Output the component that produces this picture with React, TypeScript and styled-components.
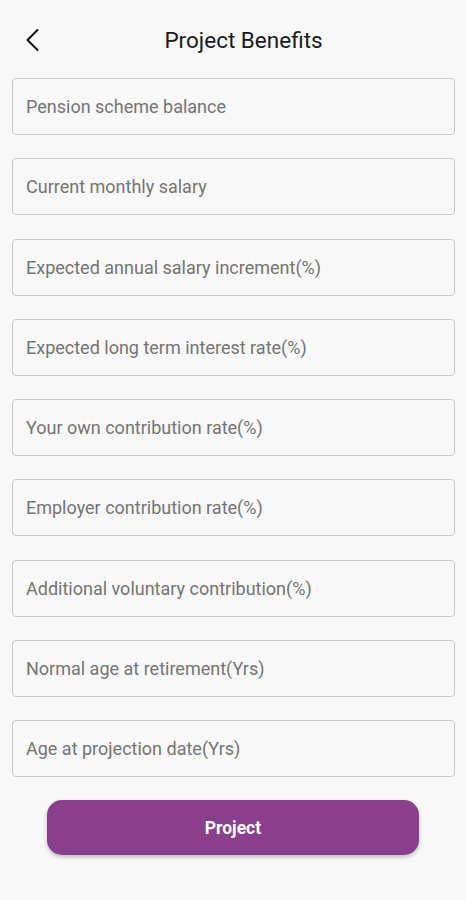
import styled, { createGlobalStyle } from "styled-components";

const GlobalStyle = createGlobalStyle`
  html, body {
    margin: 0;
    padding: 0;
    background: #f8f8f8;
    font-family: Roboto, "Liberation Sans", sans-serif;
  }
`;

const Page = styled.div`
  width: 466px;
  min-height: 900px;
  box-sizing: border-box;
  background: #f8f8f8;
  display: flex;
  flex-direction: column;
`;

const Header = styled.header`
  height: 78px;
  display: flex;
  align-items: center;
  padding: 0 20px;
  box-sizing: border-box;
`;

const BackButton = styled.button`
  flex: none;
  background: none;
  border: none;
  padding: 0;
  width: 24px;
  height: 28px;
  display: flex;
  align-items: center;
  justify-content: center;
  margin-left: 1px;
  margin-top: 2px;
`;

const Title = styled.h1`
  flex: 1;
  margin: 0 4px 0 0;
  padding-top: 2px;
  text-align: center;
  font-size: 22.5px;
  line-height: 30px;
  font-weight: 400;
  color: #1a1a1a;
`;

const Form = styled.div`
  display: flex;
  flex-direction: column;
  gap: 23.3px;
  padding: 0 11px 0 12px;
`;

const Field = styled.input`
  height: 57px;
  box-sizing: border-box;
  width: 100%;
  border: 1.5px solid #c9c9c9;
  border-radius: 4px;
  background: #f8f8f8;
  padding: 0 13px;
  font-family: Roboto, "Liberation Sans", sans-serif;
  font-size: 18px;
  color: #333;
  outline: none;
  &::placeholder {
    color: #747474;
  }
`;

const ButtonRow = styled.div`
  display: flex;
  justify-content: center;
  padding-top: 23px;
`;

const ProjectButton = styled.button`
  width: 372px;
  height: 55px;
  border: none;
  border-radius: 15px;
  background: #8a3f8d;
  color: #fff;
  font-family: Roboto, "Liberation Sans", sans-serif;
  font-size: 17.5px;
  font-weight: 700;
  box-shadow: 0 2px 4px rgba(0, 0, 0, 0.25);
`;

const fields = [
  "Pension scheme balance",
  "Current monthly salary",
  "Expected annual salary increment(%)",
  "Expected long term interest rate(%)",
  "Your own contribution rate(%)",
  "Employer contribution rate(%)",
  "Additional voluntary contribution(%)",
  "Normal age at retirement(Yrs)",
  "Age at projection date(Yrs)",
];

function App() {
  return (
    <>
      <GlobalStyle />
      <Page>
        <Header>
          <BackButton aria-label="Back">
            <svg width="14" height="24" viewBox="0 0 14 24" fill="none">
              <path
                d="M11.5 2 L1.5 12 L11.5 22"
                stroke="#111"
                strokeWidth="2"
                strokeLinecap="round"
                strokeLinejoin="round"
              />
            </svg>
          </BackButton>
          <Title>Project Benefits</Title>
        </Header>
        <Form>
          {fields.map((f) => (
            <Field key={f} placeholder={f} />
          ))}
        </Form>
        <ButtonRow>
          <ProjectButton>Project</ProjectButton>
        </ButtonRow>
      </Page>
    </>
  );
}

export default App;
